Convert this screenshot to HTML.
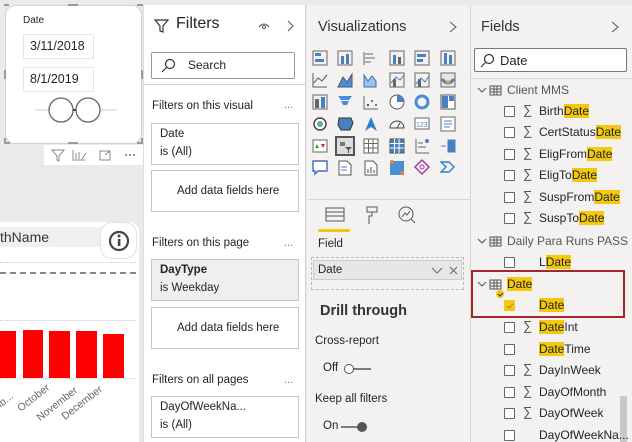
<!DOCTYPE html>
<html><head><meta charset="utf-8"><style>
*{box-sizing:border-box;margin:0;padding:0}
body{width:632px;height:442px;overflow:hidden;background:#eaeaea;font-family:"Liberation Sans",sans-serif;position:relative;color:#252423}
.a{position:absolute}
.t{font-size:11px;white-space:nowrap}
.f{font-size:11.5px;white-space:nowrap;position:absolute}
.cb{position:absolute;width:11px;height:11px;border:1px solid #666;background:#fff;border-radius:1px}
.hl{background:#f2c811}
.sig{position:absolute;font-size:13px;color:#555}
.box{position:absolute;border:1px solid #c8c6c4;background:#fff}
</style></head><body>
<div class="a" style="left:5px;top:5px;width:137px;height:139px;background:#fff;border-radius:10px;border:1px solid #d0d0d0"></div>
<div class="a" style="left:4px;top:4px;width:5px;height:2px;background:#999"></div>
<div class="a" style="left:68px;top:4px;width:10px;height:2px;background:#999"></div>
<div class="a" style="left:137px;top:4px;width:6px;height:2px;background:#999"></div>
<div class="a" style="left:4px;top:70px;width:2px;height:9px;background:#999"></div>
<div class="a" style="left:141px;top:70px;width:2px;height:9px;background:#999"></div>
<div class="a" style="left:4px;top:138px;width:6px;height:6px;border-left:2px solid #999;border-bottom:2px solid #999"></div>
<div class="a" style="left:137px;top:138px;width:6px;height:6px;border-right:2px solid #999;border-bottom:2px solid #999"></div>
<div class="a" style="left:68px;top:142px;width:10px;height:2px;background:#999"></div>
<div class="a t" style="left:23px;top:15px;font-size:10px">Date</div>
<div class="a" style="left:23px;top:34px;width:71px;height:25px;border:1px solid #e6e6e6"></div>
<div class="a t" style="left:30px;top:39px;font-size:12.5px">3/11/2018</div>
<div class="a" style="left:23px;top:67px;width:71px;height:25px;border:1px solid #e6e6e6"></div>
<div class="a t" style="left:30px;top:72px;font-size:12.5px">8/1/2019</div>
<svg class="a" style="left:35px;top:97px" width="82" height="28"><line x1="0" y1="13" x2="82" y2="13" stroke="#ccc"/><circle cx="26" cy="13" r="12" fill="#fff" stroke="#666" stroke-width="1.3"/><circle cx="53" cy="13" r="12" fill="#fff" stroke="#666" stroke-width="1.3"/><line x1="38" y1="13" x2="41" y2="13" stroke="#444" stroke-width="2"/></svg>
<div class="a" style="left:44px;top:145px;width:99px;height:20px;background:#fff"></div>
<svg class="a" style="left:44px;top:145px" width="99" height="20" stroke="#888" fill="none"><path d="M8 5h12l-5 6v5l-2-1v-4z"/><path d="M29 5v10h12M32 14V8M35 14V7M38 14l4-6"/><rect x="56" y="6" width="10" height="9"/><path d="M61 10l5-4M63 6h3v3"/><circle cx="82" cy="10" r=".6" fill="#888"/><circle cx="86" cy="10" r=".6" fill="#888"/><circle cx="90" cy="10" r=".6" fill="#888"/></svg>
<div class="a" style="left:0;top:222px;width:139px;height:220px;background:#fff;border-radius:0 10px 0 0"></div>
<div class="a" style="left:0;top:227px;width:104px;height:20px;background:#f0f0f0"></div>
<div class="a" style="left:0;top:229px;font-size:14px;color:#333">thName</div>
<div class="a" style="left:100px;top:222px;width:37px;height:37px;border-radius:12px;border:1px solid #e0e0e0;background:#fff"></div>
<svg class="a" style="left:107px;top:229px" width="24" height="24"><circle cx="12" cy="12" r="9" fill="none" stroke="#444" stroke-width="2.2"/><rect x="10.8" y="10" width="2.6" height="7" fill="#444"/><circle cx="12" cy="7" r="1.5" fill="#444"/></svg>
<div class="a" style="left:0;top:262px;width:136px;border-top:1px dotted #ccc"></div>
<div class="a" style="left:0;top:272px;width:136px;border-top:2px dashed #888"></div>
<div class="a" style="left:0;top:320px;width:136px;border-top:1px dotted #ccc"></div>
<div class="a" style="left:0;top:378px;width:136px;border-top:1px dotted #ccc"></div>
<div class="a" style="left:0;top:331px;width:16px;height:47px;background:#f00"></div>
<div class="a" style="left:23px;top:330px;width:20px;height:48px;background:#f00"></div>
<div class="a" style="left:49px;top:331px;width:21px;height:47px;background:#f00"></div>
<div class="a" style="left:76px;top:331px;width:21px;height:47px;background:#f00"></div>
<div class="a" style="left:103px;top:334px;width:21px;height:44px;background:#f00"></div>
<div class="a t" style="left:-14px;top:398px;transform:rotate(-38deg);color:#666;font-size:10.5px">emb...</div>
<div class="a t" style="left:15px;top:392px;transform:rotate(-38deg);color:#666;font-size:10.5px">October</div>
<div class="a t" style="left:33px;top:398px;transform:rotate(-38deg);color:#666;font-size:10.5px">November</div>
<div class="a t" style="left:58px;top:397px;transform:rotate(-38deg);color:#666;font-size:10.5px">December</div>
<div class="a" style="left:143px;top:5px;width:163px;height:437px;background:#fff;border-left:1px solid #ddd;border-right:1px solid #d0d0d0"></div>
<svg class="a" style="left:154px;top:18px" width="16" height="16" fill="none" stroke="#333" stroke-width="1.2"><path d="M1 2h13l-5 6v6l-3-1V8z"/></svg>
<div class="a" style="left:176px;top:15px;font-size:16px;color:#252423">Filters</div>
<svg class="a" style="left:258px;top:18px" width="40" height="16" fill="none" stroke="#555"><path d="M1 9q5-6 10 0"/><circle cx="6" cy="9" r="1.5"/><path d="M30 3l5 5-5 5"/></svg>
<div class="a" style="left:151px;top:52px;width:144px;height:27px;border:1px solid #999;border-radius:2px"></div>
<svg class="a" style="left:160px;top:58px" width="16" height="16" fill="none" stroke="#333" stroke-width="1.2"><circle cx="10" cy="6" r="4.5"/><path d="M6.5 9.5L2 14"/></svg>
<div class="a" style="left:188px;top:58px;font-size:12px">Search</div>
<div class="a" style="left:144px;top:84px;width:161px;border-top:1px solid #ccc"></div>
<div class="f" style="left:152px;top:100px">Filters on this visual</div>
<div class="a t" style="left:284px;top:99px;color:#777">...</div>
<div class="box" style="left:151px;top:123px;width:148px;height:42px"></div>
<div class="f" style="left:160px;top:128px">Date</div>
<div class="f" style="left:160px;top:146px">is (All)</div>
<div class="box" style="left:151px;top:170px;width:148px;height:42px"></div>
<div class="f" style="left:177px;top:185px">Add data fields here</div>
<div class="f" style="left:152px;top:237px">Filters on this page</div>
<div class="a t" style="left:284px;top:237px;color:#777">...</div>
<div class="box" style="left:151px;top:259px;width:148px;height:42px;background:#f0efee"></div>
<div class="f" style="left:160px;top:264px;font-weight:bold">DayType</div>
<div class="f" style="left:160px;top:282px">is Weekday</div>
<div class="box" style="left:151px;top:307px;width:148px;height:42px"></div>
<div class="f" style="left:177px;top:322px">Add data fields here</div>
<div class="f" style="left:152px;top:374px">Filters on all pages</div>
<div class="a t" style="left:284px;top:374px;color:#777">...</div>
<div class="box" style="left:151px;top:396px;width:148px;height:42px"></div>
<div class="f" style="left:160px;top:401px">DayOfWeekNa...</div>
<div class="f" style="left:160px;top:419px">is (All)</div>
<div class="a" style="left:307px;top:5px;width:164px;height:437px;background:#f3f2f1;border-right:1px solid #d6d6d6"></div>
<div class="a" style="left:318px;top:19px;font-size:14.5px;color:#333">Visualizations</div>
<svg class="a" style="left:447px;top:20px" width="12" height="14" fill="none" stroke="#555"><path d="M3 2l6 5-6 5"/></svg>
<svg class="a" style="left:311px;top:49px" width="150" height="130">
<g>
<rect x="2" y="2" width="14" height="14" fill="none" stroke="#666"/><rect x="4" y="4" width="6" height="3" fill="#4a7fc1"/><rect x="4" y="10" width="9" height="3" fill="#4a7fc1"/>
<rect x="27" y="2" width="14" height="14" fill="none" stroke="#666"/><rect x="30" y="7" width="3" height="8" fill="#4a7fc1"/><rect x="35" y="5" width="3" height="10" fill="#4a7fc1"/>
<path d="M53 3v13M54 5h8M54 9h10M54 13h6" stroke="#666" fill="none"/>
<rect x="79" y="2" width="14" height="14" fill="none" stroke="#666"/><rect x="82" y="6" width="3" height="9" fill="#4a7fc1"/><rect x="87" y="8" width="3" height="7" fill="#666"/>
<rect x="104" y="2" width="14" height="14" fill="none" stroke="#666"/><rect x="106" y="5" width="9" height="3" fill="#4a7fc1"/><rect x="106" y="10" width="6" height="3" fill="#4a7fc1"/>
<rect x="130" y="2" width="14" height="14" fill="none" stroke="#666"/><rect x="133" y="4" width="3" height="11" fill="#4a7fc1"/><rect x="138" y="6" width="3" height="9" fill="#4a7fc1"/>
<path d="M2 24v14h14M3 34l4-5 4 3 5-6" stroke="#555" fill="none"/>
<path d="M27 38l5-10 4 5 5-8v13z" fill="#4a8fd4" stroke="#555"/>
<path d="M53 38v-12l4 6 4-5 4 5v6z" fill="#9cc4ea" stroke="#3a6fb0"/>
<rect x="79" y="24" width="14" height="14" fill="none" stroke="#666"/><rect x="82" y="30" width="3" height="8" fill="#666"/><path d="M80 34l5-6 4 3 4-5" stroke="#4a7fc1" fill="none"/>
<rect x="104" y="24" width="14" height="14" fill="none" stroke="#666"/><rect x="107" y="30" width="3" height="8" fill="#666"/><path d="M105 35l5-6 4 4 4-6" stroke="#4a7fc1" fill="none"/>
<rect x="130" y="24" width="14" height="14" fill="#e7e7e7" stroke="#666"/><path d="M131 30q6 8 12 0" stroke="#4a7fc1" stroke-width="3" fill="none"/><circle cx="137" cy="33" r="2" fill="#e8a43a"/>
<rect x="2" y="46" width="14" height="14" fill="none" stroke="#666"/><rect x="4" y="50" width="4" height="9" fill="#666"/><rect x="10" y="48" width="4" height="11" fill="#4a7fc1"/>
<path d="M27 47h14l-3 4h-8zM30 52h8l-2 4h-4z" fill="#4a8fd4"/>
<path d="M53 47v13h14" stroke="#666" fill="none"/><rect x="56" y="55" width="2" height="2" fill="#555"/><rect x="60" y="51" width="2" height="2" fill="#4a7fc1"/><rect x="64" y="55" width="2" height="2" fill="#4a7fc1"/>
<circle cx="86" cy="53" r="7" fill="#fff" stroke="#555"/><path d="M86 46v7h7a7 7 0 0 0-7-7z" fill="#4a7fc1"/>
<circle cx="111" cy="53" r="6" fill="none" stroke="#4a8fd4" stroke-width="3"/>
<rect x="130" y="46" width="14" height="14" fill="#fff" stroke="#555"/><rect x="131" y="47" width="6" height="12" fill="#4a7fc1"/><rect x="138" y="47" width="5" height="5" fill="#4a7fc1"/>
<circle cx="9" cy="75" r="6" fill="#fff" stroke="#444" stroke-width="1.5"/><circle cx="9" cy="75" r="3" fill="#6a9"/>
<path d="M28 69h12l2 5-3 7h-9l-3-5z" fill="#4a7fc1" stroke="#333"/>
<path d="M54 82l6-14 6 14-6-4z" fill="#2f7fd0"/>
<path d="M79 79a7 7 0 0 1 14 0z" fill="none" stroke="#444"/><path d="M86 79l3-5" stroke="#444"/>
<rect x="104" y="69" width="14" height="11" fill="#fff" stroke="#666"/><text x="105" y="78" font-size="7" fill="#4a7fc1" font-family="Liberation Sans">123</text>
<rect x="130" y="68" width="14" height="14" fill="#fff" stroke="#666"/><path d="M133 72h8M133 75h8M133 78h6" stroke="#4a7fc1"/>
<rect x="2" y="91" width="14" height="12" fill="#fff" stroke="#666"/><path d="M10 95h4l-2 4z" fill="#c33"/><path d="M4 99l2-4 2 4z" fill="#3a3"/>
<rect x="25" y="88" width="18" height="18" fill="#ddd" stroke="#555" stroke-width="2"/><rect x="29" y="93" width="5" height="4" fill="#777"/><path d="M34 98h7l-3 3v3h-1v-3z" fill="#555"/>
<rect x="53" y="90" width="14" height="14" fill="#fff" stroke="#666"/><path d="M53 94.5h14M53 99h14M57.5 90v14M62 90v14" stroke="#666"/>
<rect x="79" y="90" width="14" height="14" fill="#4a7fc1" stroke="#555"/><path d="M79 94.5h14M79 99h14M83.5 90v14M88 90v14" stroke="#fff"/>
<path d="M105 90v14h13M107 94h5M107 98h8" stroke="#666" fill="none"/><circle cx="116" cy="92" r="2" fill="#4a7fc1"/>
<path d="M130 97h5M137 91h7v12h-7z" fill="#4a7fc1" stroke="#4a7fc1"/>
<path d="M2 112h14v10h-9l-3 3v-3H2z" fill="#fff" stroke="#3a6fb0" stroke-width="1.4"/>
<path d="M28 112h8l4 4v10H28z" fill="#fff" stroke="#555"/><path d="M30 118h6M30 121h6" stroke="#4a7fc1"/>
<path d="M54 112h8l4 4v10H54z" fill="#fff" stroke="#555"/><path d="M57 124v-4M60 124v-6M63 124v-3" stroke="#444"/>
<rect x="79" y="112" width="14" height="14" fill="#4a8fd4"/><circle cx="81" cy="113" r="2" fill="#e8843a"/><circle cx="91" cy="124" r="2" fill="#e8843a"/>
<path d="M111 111l7 7-7 7-7-7z" fill="none" stroke="#a23ca8" stroke-width="1.5"/><circle cx="111" cy="118" r="2" fill="none" stroke="#a23ca8"/>
<path d="M130 113h8l5 5-5 5h-8l5-5z" fill="none" stroke="#2f7fd0" stroke-width="1.4"/>
<text x="2" y="140" font-size="10" fill="#555">...</text>
</g></svg>
<div class="a" style="left:308px;top:199px;width:162px;border-top:1px solid #d6d6d6"></div>
<svg class="a" style="left:325px;top:205px" width="100" height="20" fill="none" stroke="#555"><rect x="1" y="3" width="18" height="13"/><path d="M1 7h18M1 11h18"/><rect x="42" y="2" width="10" height="5"/><path d="M47 7v4h-3v8"/><circle cx="81" cy="9" r="7"/><path d="M77 12l3-4 2 2 3-4M86 14l4 4"/></svg>
<div class="a" style="left:318px;top:229px;width:32px;height:3px;background:#f2c811;border-radius:2px"></div>
<div class="f" style="left:318px;top:238px">Field</div>
<div class="a" style="left:311px;top:257px;width:153px;height:33px;border:1px dashed #bbb"></div>
<div class="a" style="left:313px;top:260px;width:149px;height:20px;background:#e8e7e6;border:1px solid #ccc"></div>
<div class="f" style="left:318px;top:264px">Date</div>
<svg class="a" style="left:431px;top:265px" width="30" height="12" fill="none" stroke="#666"><path d="M1 3l5 5 5-5M19 2l7 7M26 2l-7 7"/></svg>
<div class="a" style="left:320px;top:303px;font-size:14.5px;font-weight:bold;color:#333">Drill through</div>
<div class="f" style="left:315px;top:335px">Cross-report</div>
<div class="f" style="left:323px;top:362px">Off</div>
<svg class="a" style="left:342px;top:362px" width="30" height="14"><circle cx="7" cy="7" r="4.5" fill="#fff" stroke="#555"/><line x1="12" y1="7" x2="29" y2="7" stroke="#555" stroke-width="1.5"/></svg>
<div class="f" style="left:315px;top:393px">Keep all filters</div>
<div class="f" style="left:323px;top:420px">On</div>
<svg class="a" style="left:340px;top:420px" width="30" height="14"><line x1="1" y1="7" x2="18" y2="7" stroke="#555" stroke-width="1.5"/><circle cx="22" cy="7" r="5" fill="#555"/></svg>
<div class="a" style="left:471px;top:5px;width:161px;height:437px;background:#f3f2f1"></div>
<div class="a" style="left:481px;top:19px;font-size:14.5px;color:#333">Fields</div>
<svg class="a" style="left:609px;top:20px" width="12" height="14" fill="none" stroke="#555"><path d="M3 2l6 5-6 5"/></svg>
<div class="a" style="left:474px;top:48px;width:153px;height:24px;border:1px solid #777;background:#fff;border-radius:2px"></div>
<svg class="a" style="left:479px;top:53px" width="16" height="16" fill="none" stroke="#333" stroke-width="1.2"><circle cx="10" cy="6" r="4.5"/><path d="M6.5 9.5L2 14"/></svg>
<div class="a" style="left:500px;top:53px;font-size:13px">Date</div>
<div class="a" style="left:471px;top:78px;width:161px;border-top:1px solid #d6d6d6"></div>
<div class="a" style="left:620px;top:396px;width:7px;height:46px;background:#c8c8c8"></div>
<svg class="a" style="left:476px;top:84px" width="30" height="300" fill="none" stroke="#555"><path d="M2 4l4 4 4-4M2 155l4 4 4-4M2 198l4 4 4-4"/><g><rect x="14" y="2" width="11" height="9"/><path d="M14 5h11M14 8h11M18 2v9M21 2v9"/></g><g transform="translate(0,151)"><rect x="14" y="2" width="11" height="9"/><path d="M14 5h11M14 8h11M18 2v9M21 2v9"/></g><g transform="translate(0,194)"><rect x="14" y="2" width="11" height="9"/><path d="M14 5h11M14 8h11M18 2v9M21 2v9"/></g><circle cx="24" cy="210" r="4" fill="#f2c811" stroke="none"/><path d="M22 210l2 2 3-3" stroke="#333"/></svg>
<div class="f" style="left:507px;top:83px;color:#555;font-size:12px">Client MMS</div>
<div class="f" style="left:507px;top:234px;color:#555;font-size:12px">Daily Para Runs PASS</div>
<div class="f" style="left:507px;top:277px;font-size:12px"><span class="hl">Date</span></div>
<div class="a" style="left:471px;top:270px;width:154px;height:48px;border:2px solid #a4262c"></div>
<div class="cb" style="left:504px;top:106px"></div><div class="sig" style="left:523px;top:102px">∑</div><div class="f" style="left:539px;top:104px;font-size:12px">Birth<span class="hl">Date</span></div>
<div class="cb" style="left:504px;top:127px"></div><div class="sig" style="left:523px;top:123px">∑</div><div class="f" style="left:539px;top:125px;font-size:12px">CertStatus<span class="hl">Date</span></div>
<div class="cb" style="left:504px;top:149px"></div><div class="sig" style="left:523px;top:145px">∑</div><div class="f" style="left:539px;top:147px;font-size:12px">EligFrom<span class="hl">Date</span></div>
<div class="cb" style="left:504px;top:170px"></div><div class="sig" style="left:523px;top:166px">∑</div><div class="f" style="left:539px;top:168px;font-size:12px">EligTo<span class="hl">Date</span></div>
<div class="cb" style="left:504px;top:192px"></div><div class="sig" style="left:523px;top:188px">∑</div><div class="f" style="left:539px;top:190px;font-size:12px">SuspFrom<span class="hl">Date</span></div>
<div class="cb" style="left:504px;top:213px"></div><div class="sig" style="left:523px;top:209px">∑</div><div class="f" style="left:539px;top:211px;font-size:12px">SuspTo<span class="hl">Date</span></div>
<div class="cb" style="left:504px;top:257px"></div><div class="f" style="left:539px;top:255px;font-size:12px">L<span class="hl">Date</span></div>
<div class="cb" style="left:504px;top:300px;background:#f2c811;border-color:#f2c811"></div><svg class="a" style="left:505px;top:301px" width="10" height="10"><path d="M2 5l2 2 4-4" stroke="#b89000" fill="none"/></svg><div class="f" style="left:539px;top:298px;font-size:12px"><span class="hl">Date</span></div>
<div class="cb" style="left:504px;top:322px"></div><div class="sig" style="left:523px;top:318px">∑</div><div class="f" style="left:539px;top:320px;font-size:12px"><span class="hl">Date</span>Int</div>
<div class="cb" style="left:504px;top:344px"></div><div class="f" style="left:539px;top:342px;font-size:12px"><span class="hl">Date</span>Time</div>
<div class="cb" style="left:504px;top:365px"></div><div class="sig" style="left:523px;top:361px">∑</div><div class="f" style="left:539px;top:363px;font-size:12px">DayInWeek</div>
<div class="cb" style="left:504px;top:387px"></div><div class="sig" style="left:523px;top:383px">∑</div><div class="f" style="left:539px;top:385px;font-size:12px">DayOfMonth</div>
<div class="cb" style="left:504px;top:408px"></div><div class="sig" style="left:523px;top:404px">∑</div><div class="f" style="left:539px;top:406px;font-size:12px">DayOfWeek</div>
<div class="cb" style="left:504px;top:430px"></div><div class="f" style="left:539px;top:428px;font-size:12px">DayOfWeekNa...</div>
</body></html>
